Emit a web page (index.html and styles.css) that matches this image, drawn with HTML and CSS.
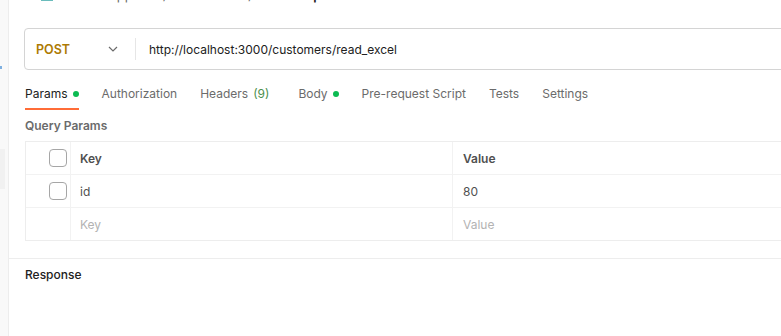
FILE: index.html
```html
<!DOCTYPE html>
<html>
  <head>
    <meta charset="UTF-8">
    <title>New Request</title>
    <link rel="stylesheet" href="styles.css">
  </head>
  <body>
    <div class="app">
      <aside class="sidebar">
        <span class="side-mark"></span>
        <span class="side-block"></span>
      </aside>
      <main class="workspace">
        <div class="crumbs">
          <svg class="crumb-icon" width="16" height="14" viewBox="0 0 16 14">
            <path d="M2 9h12M2 12h12M5 6L2 9l3 3" fill="none" stroke="#3aa7a7" stroke-width="1.5"/>
          </svg>
          <span class="crumb">WhatsApp-BE</span>
          <span class="crumb-sep">/</span>
          <span class="crumb">customers</span>
          <span class="crumb-sep">/</span>
          <span class="crumb-current">New Request</span>
        </div>

        <div class="url-bar">
          <div class="method">
            <span>POST</span>
            <svg width="10" height="6" viewBox="0 0 10 6">
              <path d="M1 1l4 4 4-4" fill="none" stroke="#6b6b6b" stroke-width="1.2"/>
            </svg>
          </div>
          <div class="url">http://localhost:3000/customers/read_excel</div>
        </div>

        <nav class="tabs">
          <span class="tab active">Params <i class="dot"></i></span>
          <span class="tab">Authorization</span>
          <span class="tab headers">Headers <span class="count">(9)</span></span>
          <span class="tab">Body <i class="dot"></i></span>
          <span class="tab">Pre-request Script</span>
          <span class="tab">Tests</span>
          <span class="tab">Settings</span>
        </nav>

        <div class="section-title">Query Params</div>

        <div class="params">
          <div class="row head">
            <div class="cell check"><span class="box"></span></div>
            <div class="cell key">Key</div>
            <div class="cell value">Value</div>
          </div>
          <div class="row">
            <div class="cell check"><span class="box"></span></div>
            <div class="cell key">id</div>
            <div class="cell value">80</div>
          </div>
          <div class="row empty">
            <div class="cell check"></div>
            <div class="cell key">Key</div>
            <div class="cell value">Value</div>
          </div>
        </div>

        <div class="response">
          <div class="response-title">Response</div>
        </div>
      </main>
    </div>
  </body>
</html>
```

FILE: styles.css
```css
html, body {
    margin: 0;
    height: 100%;
    overflow: hidden;
}

body {
    font-family: Inter, "Noto Sans", sans-serif;
    font-size: 12px;
    color: #212121;
    background-color: #fff;
}

.app {
    display: flex;
    height: 100%;
}

.sidebar {
    width: 8px;
    flex: none;
    background-color: #f9f9f9;
    border-right: 1px solid #ededed;
    display: flex;
    flex-direction: column;
}

.side-mark {
    width: 2px;
    height: 3px;
    margin-top: 66px;
    background-color: #7fb0e0;
}

.side-block {
    width: 5px;
    height: 40px;
    margin-top: 80px;
    background-color: #f1f1f1;
}

.workspace {
    flex: 1;
    min-width: 0;
}

.crumbs {
    display: flex;
    align-items: center;
    gap: 8px;
    height: 20px;
    margin-top: -15px;
    padding-left: 30px;
    font-size: 13px;
    color: #6b6b6b;
}

.crumb-icon {
    margin-right: 6px;
}

.crumb-current {
    color: #212121;
    font-weight: 600;
}

.url-bar {
    display: flex;
    align-items: center;
    height: 42px;
    box-sizing: border-box;
    margin: 23px -40px 0 15px;
    border: 1px solid #d4d4d4;
    border-radius: 4px;
}

.method {
    display: flex;
    align-items: center;
    justify-content: space-between;
    width: 82px;
    padding: 0 17px 0 11px;
    border-right: 1px solid #e6e6e6;
    height: 22px;
    color: #ad7a03;
    font-size: 12.5px;
    font-weight: 600;
}

.url {
    padding-left: 13px;
    font-size: 12px;
    color: #212121;
}

.tabs {
    display: flex;
    gap: 23px;
    margin: 8px 0 0 16px;
}

.tab {
    display: flex;
    align-items: center;
    gap: 5px;
    padding: 8px 0 7px;
    color: #6b6b6b;
    border-bottom: 2px solid transparent;
}

.tab.active {
    color: #212121;
    border-bottom-color: #ff6c37;
}

.tab.headers {
    margin-right: 6px;
}

.dot {
    width: 6px;
    height: 6px;
    border-radius: 50%;
    background-color: #0cbb52;
}

.count {
    color: #4c8f4c;
}

.section-title {
    margin: 8px 0 0 16px;
    color: #6b6b6b;
    font-weight: 600;
    line-height: 16px;
}

.params {
    margin: 7px -40px 0 16px;
    border: 1px solid #ededed;
}

.row {
    display: flex;
    height: 33px;
    border-top: 1px solid #f2f2f2;
    box-sizing: border-box;
}

.row.head {
    border-top: none;
    height: 32px;
}

.cell {
    display: flex;
    align-items: center;
}

.check {
    width: 45px;
    flex: none;
    justify-content: flex-end;
    padding-right: 3px;
    box-sizing: border-box;
    border-right: 1px solid #f2f2f2;
}

.box {
    width: 16px;
    height: 16px;
    border: 1px solid #a6a6a6;
    border-radius: 4px;
}

.key {
    width: 382px;
    flex: none;
    padding-left: 9px;
    box-sizing: border-box;
    border-right: 1px solid #f2f2f2;
}

.value {
    flex: 1;
    padding-left: 10px;
}

.head .cell {
    font-weight: 600;
    color: #505050;
}

.row .key, .row .value {
    color: #505050;
}

.empty .key, .empty .value {
    color: #b3b3b3;
}

.response {
    margin: 17px -40px 0 -1px;
    border-top: 1px solid #ededed;
    padding: 8px 0 0 17px;
}

.response-title {
    font-weight: 500;
    line-height: 16px;
}
```
